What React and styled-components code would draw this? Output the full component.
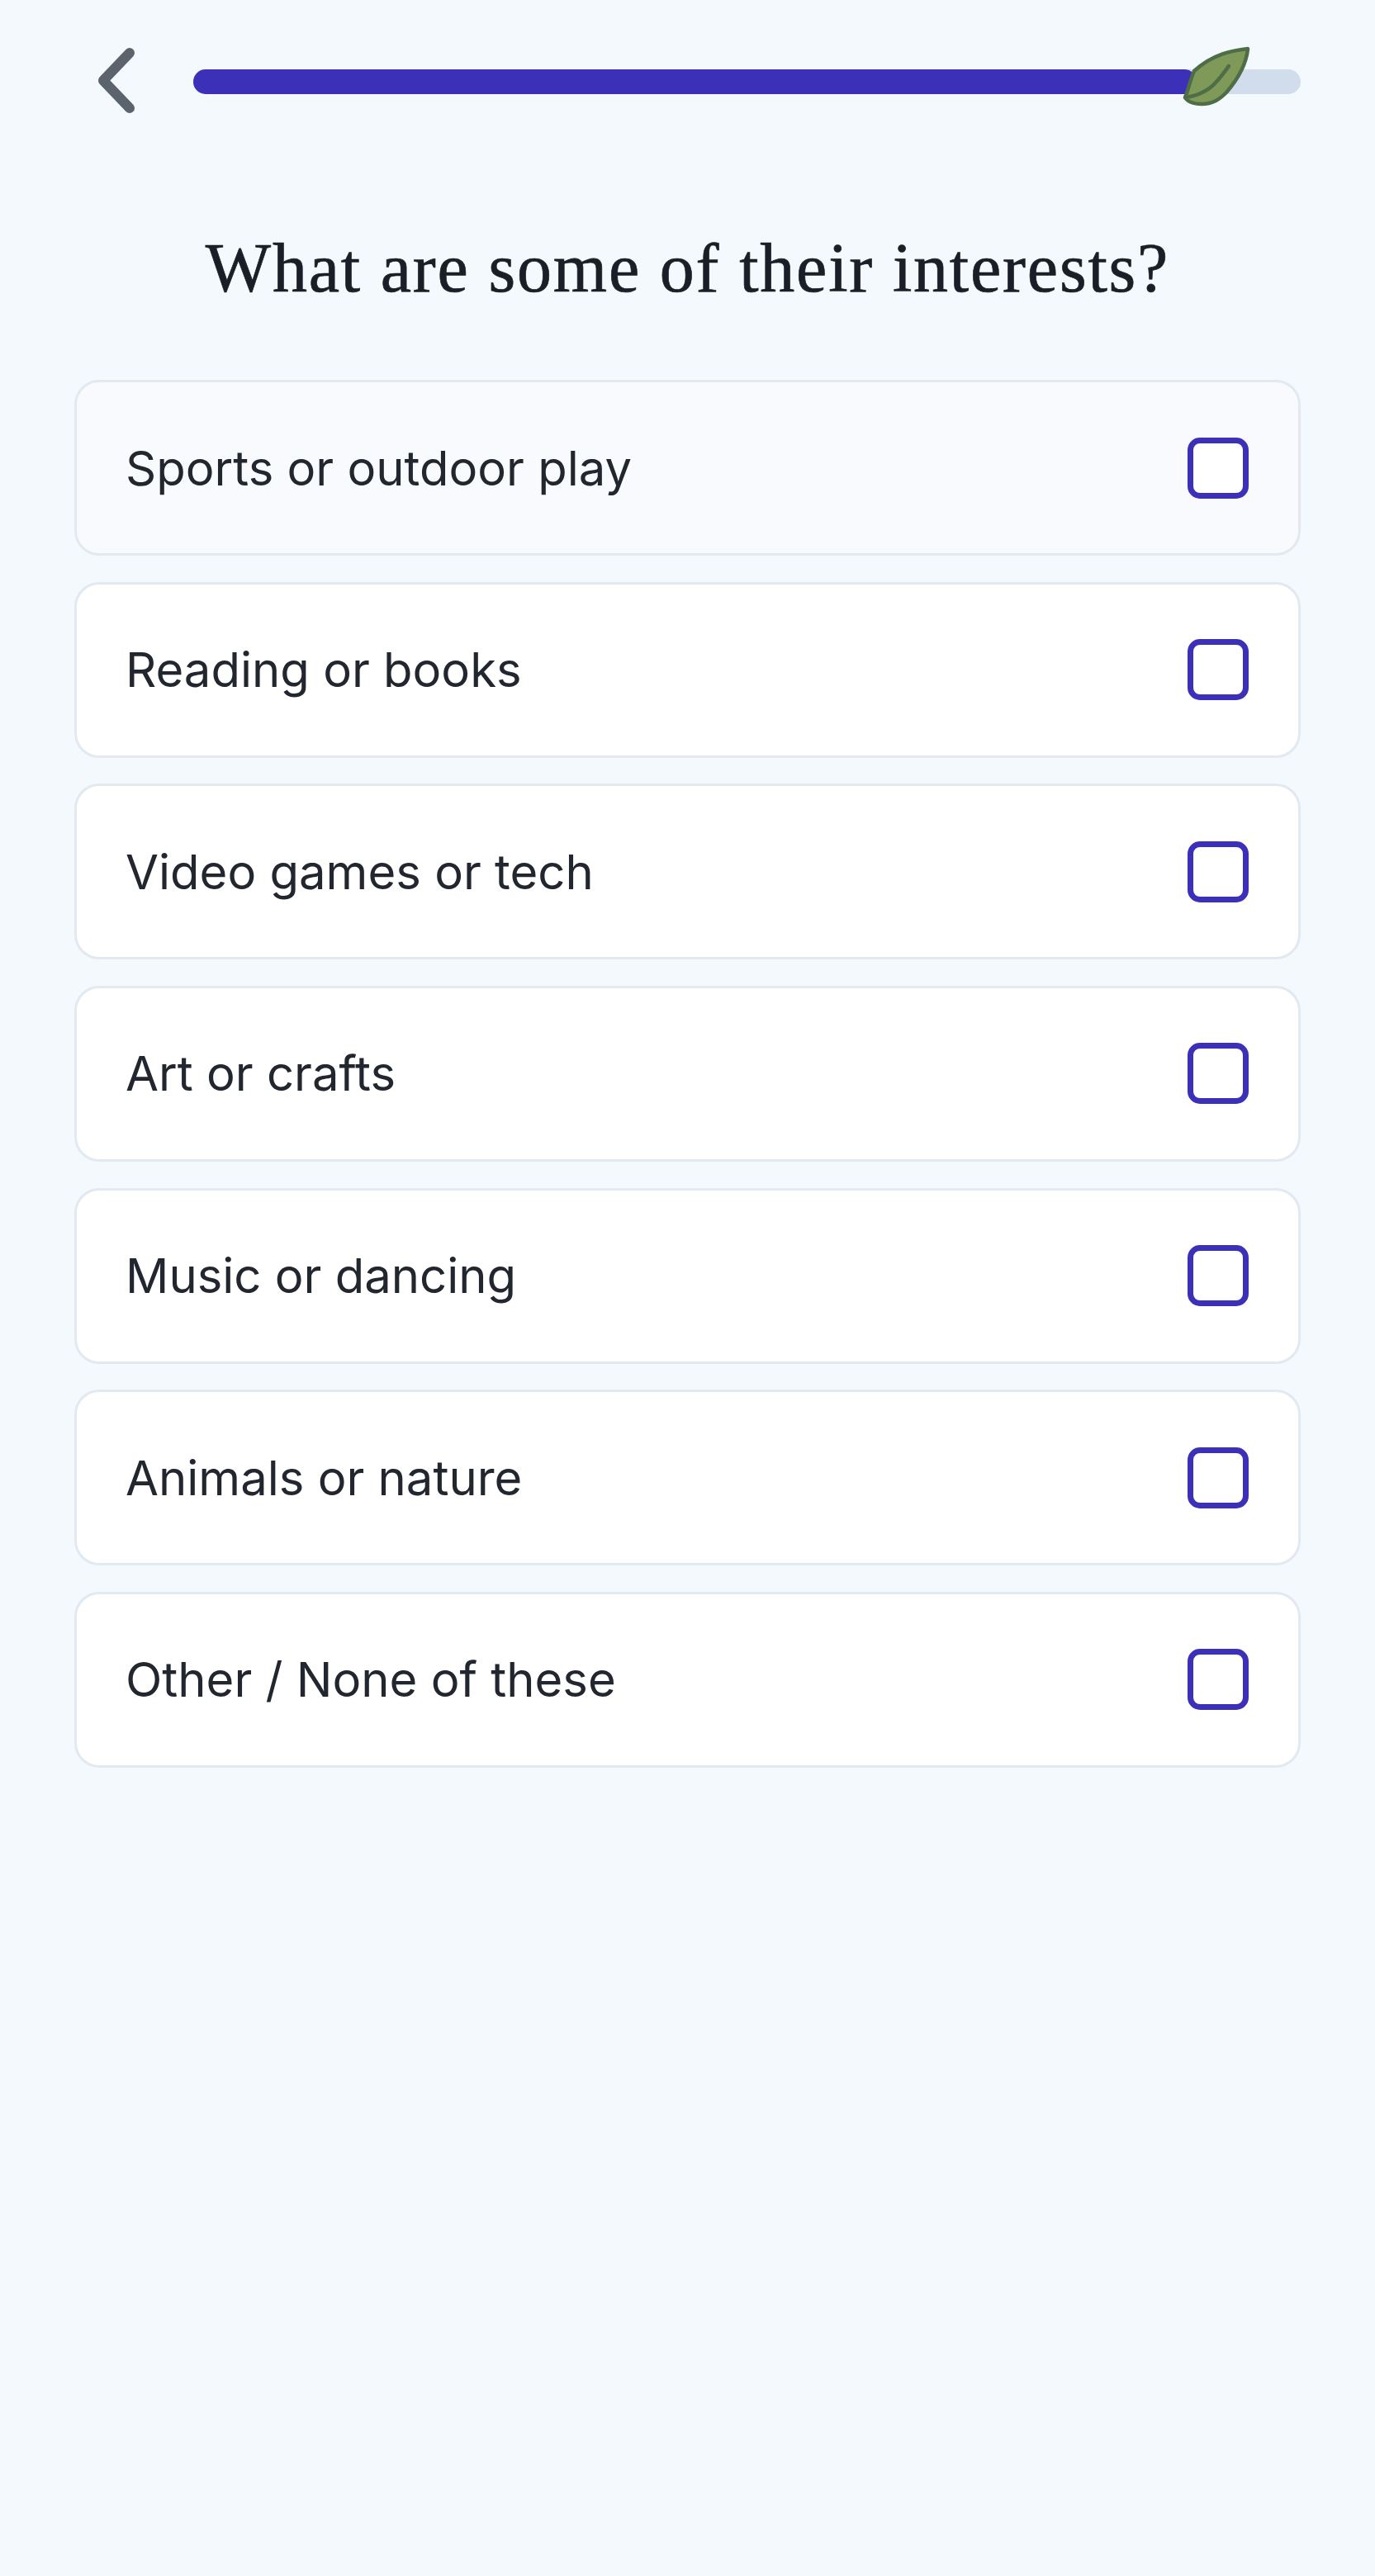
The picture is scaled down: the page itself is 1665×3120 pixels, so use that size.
import React from 'react';
import styled, { createGlobalStyle } from 'styled-components';

const GlobalStyle = createGlobalStyle`
  html, body {
    margin: 0;
    padding: 0;
    background: #f4f9fe;
  }
`;

const Page = styled.div`
  box-sizing: border-box;
  width: 100%;
  min-height: 3120px;
  padding: 0 90px;
  background: #f4f9fe;
`;

const Header = styled.header`
  display: flex;
  align-items: center;
  gap: 66px;
  height: 198px;
  padding-left: 26px;
`;

const BackButton = styled.button`
  display: flex;
  flex: none;
  width: 52px;
  height: 84px;
  padding: 0;
  border: 0;
  background: none;
  color: #5b646c;
`;

const Track = styled.div`
  position: relative;
  flex: 1;
  height: 30px;
  border-radius: 15px;
  background: #d1ddec;
`;

const Fill = styled.div`
  height: 100%;
  border-radius: 15px;
  background: #3d30b8;
`;

const Leaf = styled.svg`
  position: absolute;
  top: -28px;
  right: 60px;
  width: 84px;
  height: 76px;
`;

const Title = styled.h1`
  margin: 0 0 92px;
  padding-top: 84px;
  color: #1a1f27;
  font-family: "Liberation Serif", serif;
  font-size: 84px;
  font-weight: 400;
  line-height: 86px;
  letter-spacing: 1.8px;
  text-align: center;
  -webkit-text-stroke: 0.7px #1a1f27;
`;

const Options = styled.div`
  display: flex;
  flex-direction: column;
  gap: 31.67px;
`;

const Option = styled.label`
  display: flex;
  align-items: center;
  justify-content: space-between;
  box-sizing: border-box;
  height: 213px;
  padding: 0 60px 0 59px;
  border: 3px solid #e2e9f1;
  border-radius: 30px;
  background: ${props => (props.$hover ? '#f9fafd' : '#ffffff')};
`;

const OptionLabel = styled.span`
  color: #22262e;
  font-family: Inter, sans-serif;
  font-size: 58px;
  font-weight: 400;
`;

const Checkbox = styled.span`
  flex: none;
  box-sizing: border-box;
  width: 74px;
  height: 74px;
  border: 7px solid #3d30b8;
  border-radius: 15px;
  background: #ffffff;
`;

const OPTIONS = [
  'Sports or outdoor play',
  'Reading or books',
  'Video games or tech',
  'Art or crafts',
  'Music or dancing',
  'Animals or nature',
  'Other / None of these',
];

const App = () => {
  return (
    <Page>
      <GlobalStyle />
      <Header>
        <BackButton aria-label="Back">
          <svg width="52" height="84" viewBox="0 0 52 84" fill="none">
            <path d="M41 7 L9 40.5 L41 74" stroke="currentColor" strokeWidth="12" strokeLinecap="round" strokeLinejoin="round" />
          </svg>
        </BackButton>
        <Track>
          <Fill style={{ width: `${(1215 / 1341) * 100}%` }} />
          <Leaf viewBox="0 0 84 76">
            <path
              d="M80 3 C62 5 38 9 15 30 C10 42 8 52 4 62 C8 69 16 70 24 70 C38 70 46 64 54 56 C66 42 78 24 80 3 Z"
              fill="#7f9a58"
              stroke="#4f6d47"
              strokeWidth="4.5"
              strokeLinejoin="round"
            />
            <path d="M57 24 C46 38 36 58 4 62" fill="none" stroke="#4f6d47" strokeWidth="4.5" strokeLinecap="round" />
          </Leaf>
        </Track>
      </Header>
      <Title>What are some of their interests?</Title>
      <Options>
        {OPTIONS.map((label, i) => (
          <Option key={label} $hover={i === 0}>
            <OptionLabel>{label}</OptionLabel>
            <Checkbox />
          </Option>
        ))}
      </Options>
    </Page>
  );
};

export default App;
